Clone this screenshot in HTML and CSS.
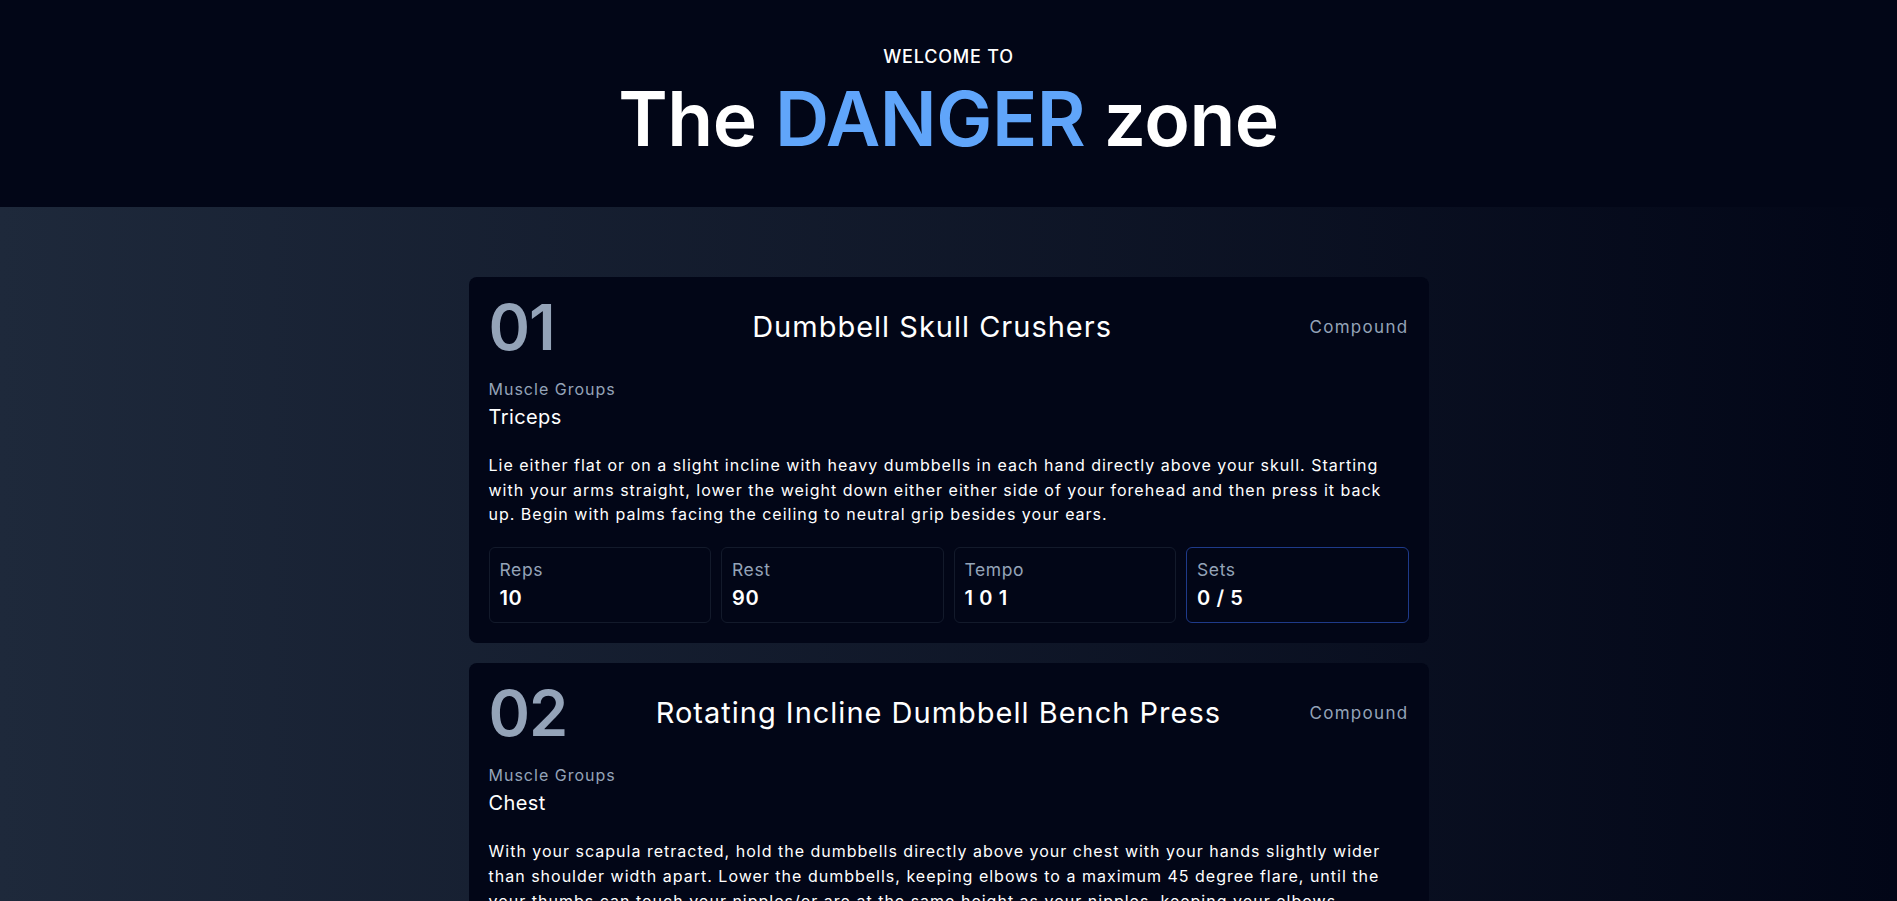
FILE: index.html
```html
<!DOCTYPE html>
<html lang="en">
<head>
<meta charset="utf-8">
<title>The DANGER zone</title>
<link rel="stylesheet" href="styles.css">
</head>
<body>
<header class="hero">
  <p class="hero-kicker">WELCOME TO</p>
  <h1 class="hero-title">The <span class="hero-accent">DANGER</span> zone</h1>
</header>
<main class="workout">
  <section class="card">
    <div class="card-head">
      <span class="card-num">01</span>
      <h2 class="card-title">Dumbbell Skull Crushers</h2>
      <span class="card-type">Compound</span>
    </div>
    <p class="card-label">Muscle Groups</p>
    <p class="card-muscles">Triceps</p>
    <p class="card-desc">Lie either flat or on a slight incline with heavy dumbbells in each hand directly above your skull. Starting with your arms straight, lower the weight down either either side of your forehead and then press it back up. Begin with palms facing the ceiling to neutral grip besides your ears.</p>
    <div class="stats">
      <div class="stat"><span class="stat-label">Reps</span><span class="stat-value">10</span></div>
      <div class="stat"><span class="stat-label">Rest</span><span class="stat-value">90</span></div>
      <div class="stat"><span class="stat-label">Tempo</span><span class="stat-value">1 0 1</span></div>
      <div class="stat stat-active"><span class="stat-label">Sets</span><span class="stat-value">0 / 5</span></div>
    </div>
  </section>
  <section class="card">
    <div class="card-head">
      <span class="card-num">02</span>
      <h2 class="card-title">Rotating Incline Dumbbell Bench Press</h2>
      <span class="card-type">Compound</span>
    </div>
    <p class="card-label">Muscle Groups</p>
    <p class="card-muscles">Chest</p>
    <p class="card-desc">With your scapula retracted, hold the dumbbells directly above your chest with your hands slightly wider than shoulder width apart. Lower the dumbbells, keeping elbows to a maximum 45 degree flare, until the your thumbs can touch your nipples/or are at the same height as your nipples, keeping your elbows underneath your wrists. Press the weight back up, rotating your palms to face each other at the top.</p>
    <div class="stats">
      <div class="stat"><span class="stat-label">Reps</span><span class="stat-value">8</span></div>
      <div class="stat"><span class="stat-label">Rest</span><span class="stat-value">90</span></div>
      <div class="stat"><span class="stat-label">Tempo</span><span class="stat-value">2 0 1</span></div>
      <div class="stat"><span class="stat-label">Sets</span><span class="stat-value">0 / 4</span></div>
    </div>
  </section>
</main>
</body>
</html>
```
FILE: styles.css
```css
* { box-sizing: border-box; }

html, body {
  margin: 0;
  padding: 0;
}

body {
  background: #020617;
  color: #ffffff;
  font-family: Inter, "Open Sans", sans-serif;
}

p, h1, h2 { margin: 0; }

.hero {
  height: 207px;
  padding-top: 43px;
  display: flex;
  flex-direction: column;
  align-items: center;
  background: #020617;
}

.hero-kicker {
  font-size: 18px;
  line-height: 28px;
  font-weight: 500;
  letter-spacing: 0.8px;
}

.hero-title {
  margin-top: 10px;
  font-size: 75px;
  line-height: 75px;
  font-weight: 600;
  letter-spacing: -0.5px;
}

.hero-accent { color: #60a5fa; }

.workout {
  min-height: 694px;
  padding: 70px 0 40px;
  display: flex;
  flex-direction: column;
  align-items: center;
  gap: 20px;
  background: linear-gradient(to right, #1e293b, #020617);
}

.card {
  width: 960px;
  padding: 20px;
  background: #020617;
  border-radius: 8px;
}

.card-head {
  display: flex;
  justify-content: space-between;
  align-items: center;
  height: 60px;
}

.card-num {
  font-size: 63px;
  line-height: 60px;
  font-weight: 600;
  letter-spacing: -1px;
  color: #94a3b8;
}

.card-title {
  font-size: 29px;
  line-height: 36px;
  font-weight: 400;
  letter-spacing: 1px;
}

.card-type {
  font-size: 17px;
  line-height: 24px;
  letter-spacing: 1.3px;
  color: #94a3b8;
}

.card-label {
  margin-top: 20px;
  font-size: 16px;
  line-height: 24px;
  letter-spacing: 1px;
  color: #94a3b8;
}

.card-muscles {
  margin-top: 2px;
  font-size: 20px;
  line-height: 28px;
  letter-spacing: 0.4px;
}

.card-desc {
  margin-top: 22px;
  font-size: 16px;
  line-height: 24.7px;
  letter-spacing: 1px;
}

.stats {
  margin-top: 20px;
  display: grid;
  grid-template-columns: repeat(4, 1fr);
  gap: 10px;
}

.stat {
  display: flex;
  flex-direction: column;
  padding: 8px 10px 10px;
  border: 1px solid #131a2b;
  border-radius: 6px;
}

.stat-active { border-color: #1e3a8a; }

.stat-label {
  font-size: 17.5px;
  line-height: 28px;
  letter-spacing: 0.6px;
  color: #94a3b8;
}

.stat-value {
  font-size: 20px;
  line-height: 28px;
  font-weight: 600;
  letter-spacing: 0.6px;
}
```
